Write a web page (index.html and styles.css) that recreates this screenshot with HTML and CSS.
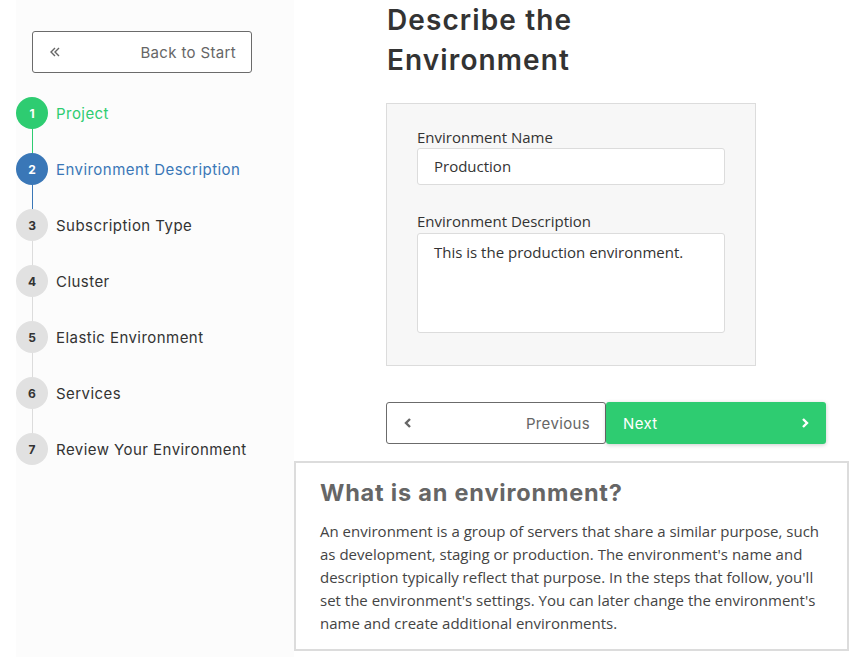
FILE: index.html
```html
<!DOCTYPE html>
<html>
<head>
<meta charset="utf-8">
<link rel="stylesheet" href="styles.css">
</head>
<body>
<div class="page">
  <aside class="sidebar">
    <button class="back-btn">
      <svg class="back-icon" width="12" height="12" viewBox="0 0 12 12"><path d="M6 2 L2 6 L6 10 M10 2 L6 6 L10 10" fill="none" stroke="#666" stroke-width="1.4"/></svg>
      <span>Back to Start</span>
    </button>
    <ol class="steps">
      <li class="step done"><span class="dot">1</span><span class="label">Project</span></li>
      <li class="step active"><span class="dot">2</span><span class="label">Environment Description</span></li>
      <li class="step"><span class="dot">3</span><span class="label">Subscription Type</span></li>
      <li class="step"><span class="dot">4</span><span class="label">Cluster</span></li>
      <li class="step"><span class="dot">5</span><span class="label">Elastic Environment</span></li>
      <li class="step"><span class="dot">6</span><span class="label">Services</span></li>
      <li class="step last"><span class="dot">7</span><span class="label">Review Your Environment</span></li>
    </ol>
  </aside>
  <main class="main">
    <h1 class="title">Describe the<br>Environment</h1>
    <form class="panel">
      <label class="field-label">Environment Name</label>
      <div class="input">Production</div>
      <label class="field-label second">Environment Description</label>
      <div class="textarea">This is the production environment.</div>
    </form>
    <div class="nav">
      <button class="btn prev">
        <svg width="10" height="12" viewBox="0 0 10 12"><path d="M7 2 L3 6 L7 10" fill="none" stroke="#666" stroke-width="2.4"/></svg>
        <span>Previous</span>
      </button>
      <button class="btn next">
        <span>Next</span>
        <svg width="10" height="12" viewBox="0 0 10 12"><path d="M3 2 L7 6 L3 10" fill="none" stroke="#fff" stroke-width="2.4"/></svg>
      </button>
    </div>
    <section class="info">
      <h2>What is an environment?</h2>
      <p>An environment is a group of servers that share a similar purpose, such as development, staging or production. The environment's name and description typically reflect that purpose. In the steps that follow, you'll set the environment's settings. You can later change the environment's name and create additional environments.</p>
    </section>
  </main>
</div>
</body>
</html>
```
FILE: styles.css
```css
* { box-sizing: border-box; }
html, body { margin: 0; padding: 0; background: #fff; }
body { width: 855px; height: 657px; overflow: hidden; font-family: "Open Sans", sans-serif; }
.page { display: flex; align-items: stretch; min-height: 657px; }
.sidebar {
  margin-left: 16px; width: 278px; background: #fcfcfc; min-height: 657px;
  padding-top: 31px;
}
.back-btn {
  display: flex; align-items: center; justify-content: space-between;
  margin-left: 16px; width: 220px; height: 42px; background: #fff;
  border: 1px solid #6b6b6b; border-radius: 3px; padding: 0 15px 0 16px;
  font-family: "Inter", sans-serif; font-size: 15px; letter-spacing: 0.35px; color: #666; cursor: pointer;
}
.steps { list-style: none; margin: 12px 0 0; padding: 0; }
.step { position: relative; display: flex; align-items: center; height: 56px; }
.step .dot {
  position: relative; z-index: 1;
  width: 32px; height: 32px; border-radius: 50%; background: #e1e1e1; color: #333;
  display: flex; align-items: center; justify-content: center;
  font-family: "Inter", sans-serif; font-weight: 700; font-size: 12px; flex: none;
}
.step::after {
  content: ""; position: absolute; left: 15.5px; top: 28px; height: 56px; width: 1px; background: #dcdcdc;
}
.step.last::after { display: none; }
.step.done .dot { background: #2ecc71; color: #fff; }
.step.done::after { background: #2ecc71; }
.step.active .dot { background: #3a77b7; color: #fff; }
.step.active::after { background: #3a77b7; }
.step .label { margin-left: 8px; font-family: "Inter", sans-serif; font-size: 15px; letter-spacing: 0.45px; color: #333; }
.step.done .label { color: #2ecc71; }
.step.active .label { color: #3a77b7; }

.main { width: 554px; display: flex; flex-direction: column; }
.title {
  margin: 0 0 23px 93px; font-family: "Inter", sans-serif; font-weight: 600; font-size: 28px;
  letter-spacing: 1.1px; line-height: 40px; color: #333;
}
.panel {
  margin-left: 92px; width: 370px; height: 263px; background: #f7f7f7; border: 1px solid #dcdcdc;
  padding: 23px 30px 0;
}
.field-label { display: block; font-size: 15px; line-height: 20px; color: #333; }
.field-label.second { margin-top: 26px; }
.input, .textarea {
  background: #fff; border: 1px solid #dcdcdc; border-radius: 3px; font-size: 15px; color: #333;
  padding: 0 16px; width: 308px; margin-top: 1px;
}
.input { height: 37px; line-height: 35px; }
.textarea { height: 100px; padding-top: 7px; line-height: 22px; margin-top: 2px; }

.nav { display: flex; margin: 36px 0 0 92px; }
.btn {
  width: 220px; height: 42px; display: flex; align-items: center; justify-content: space-between;
  font-family: "Inter", sans-serif; font-size: 15px; letter-spacing: 0.35px; border-radius: 3px; cursor: pointer;
}
.btn.prev { background: #fff; border: 1px solid #6b6b6b; color: #666; padding: 0 15px 0 16px; }
.btn.next { background: #2ecc71; border: 0; color: #fff; padding: 0 16px 0 17px; box-shadow: 0 1px 4px rgba(0,0,0,0.2); }

.info {
  margin-top: 17px; width: 555px; height: 190px; border: 2px solid #dcdcdc; padding: 15px 24px 0;
}
.info h2 { margin: 0 0 12px; font-family: "Inter", sans-serif; font-size: 23.5px; letter-spacing: 0.8px; font-weight: 700; color: #666; line-height: 30px; }
.info p { margin: 0; font-size: 15px; line-height: 23px; color: #444; }
```
